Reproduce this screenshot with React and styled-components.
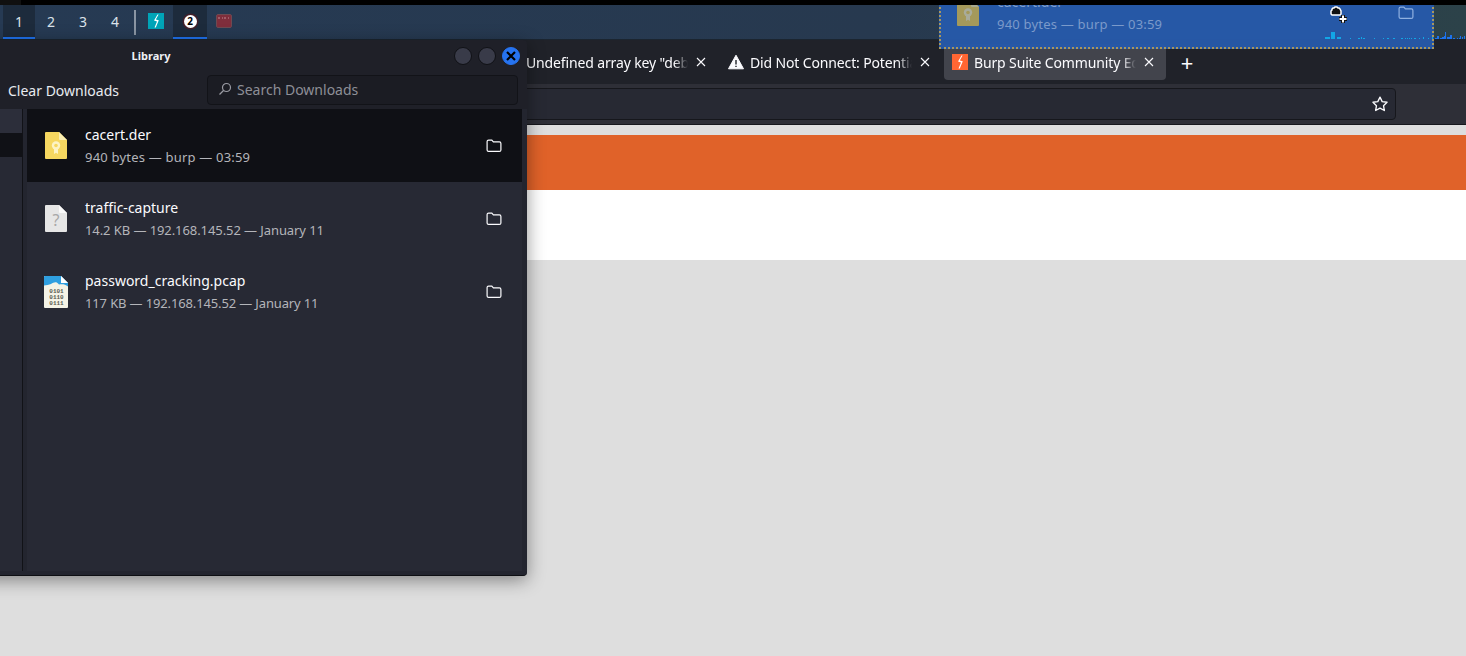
import styled, { createGlobalStyle } from "styled-components";

const GlobalStyle = createGlobalStyle`
  html, body {
    margin: 0;
    padding: 0;
    height: 100%;
    overflow: hidden;
    background: #dedede;
    font-family: "Noto Sans", sans-serif;
  }
  * { box-sizing: border-box; }
`;

const downloads = [
  { name: "cacert.der", meta: "940 bytes — burp — 03:59", kind: "cert", selected: true, tracking: 0.2 },
  { name: "traffic-capture", meta: "14.2 KB — 192.168.145.52 — January 11", kind: "unknown", tracking: -0.08 },
  { name: "password_cracking.pcap", meta: "117 KB — 192.168.145.52 — January 11", kind: "binary", tracking: -0.14 },
];

const cyanBars = [
  [0, 2, 5], [6, 7, 4], [12, 2, 4], [25, 1, 1], [33, 1, 2], [36, 2, 1], [38, 1, 2], [49, 1, 1], [58, 1, 1],
  [62, 1, 2], [68, 1, 2], [76, 1, 2], [80, 1, 1], [82, 1, 1], [84, 1, 1], [86, 1, 1], [89, 1, 2], [94, 1, 1],
  [98, 2, 1], [103, 1, 1], [107, 2, 1],
];
const blueBars = [
  [110, 1, 2], [112, 3, 2], [115, 1, 3], [117, 2, 2], [119, 3, 1], [120, 7, 1], [122, 2, 3], [125, 4, 2],
  [128, 1, 2], [132, 1, 1], [134, 1, 2], [135, 3, 1], [137, 2, 1], [139, 3, 1],
];

function BoltIcon({ bg }) {
  return (
    <svg width="16" height="16" viewBox="0 0 16 16">
      <rect width="16" height="16" fill={bg} />
      <path d="M9.5 1.5 6 7.6 9 8.4 6.5 14.5 7.8 14.5 10.8 7.2 7.8 6.4 10.6 1.5Z" fill="#fff" />
    </svg>
  );
}

function CloseGlyph() {
  return (
    <svg width="10" height="10" viewBox="0 0 10 10" stroke="#fbfbfe" strokeWidth="1.1">
      <path d="M1 1l8 8M9 1l-8 8" />
    </svg>
  );
}

function FolderIcon({ color = "#fbfbfe" }) {
  return (
    <svg width="16" height="14" viewBox="0 0 16 14" fill="none" stroke={color} strokeWidth="1.2">
      <path d="M2.6 1.1h3.2l1.6 1.8h6a1.5 1.5 0 0 1 1.5 1.5v6.5a1.5 1.5 0 0 1-1.5 1.5H2.6a1.5 1.5 0 0 1-1.5-1.5V2.6a1.5 1.5 0 0 1 1.5-1.5Z" />
    </svg>
  );
}

function FileIcon({ kind }) {
  if (kind === "cert") {
    return (
      <svg width="22" height="27" viewBox="0 0 22 27">
        <path d="M1 0h13l8 8v18a1 1 0 0 1-1 1H1a1 1 0 0 1-1-1V1a1 1 0 0 1 1-1Z" fill="#f6d760" />
        <path d="M14 0l8 8h-7a1 1 0 0 1-1-1Z" fill="#fbeeb0" />
        <circle cx="11" cy="13.5" r="4.2" fill="#fdf3c4" />
        <circle cx="11" cy="13.5" r="1.8" fill="#f6d760" />
        <path d="M9 17h4v5l-2-1.2L9 22Z" fill="#fdf3c4" />
      </svg>
    );
  }
  if (kind === "unknown") {
    return (
      <svg width="22" height="27" viewBox="0 0 22 27">
        <path d="M1 0h13l8 8v18a1 1 0 0 1-1 1H1a1 1 0 0 1-1-1V1a1 1 0 0 1 1-1Z" fill="#e6e6e6" />
        <path d="M14 0l8 8h-7a1 1 0 0 1-1-1Z" fill="#fafafa" />
        <text x="11" y="21" textAnchor="middle" fontSize="16" fontFamily="Noto Sans, sans-serif" fill="#a8a8a8">?</text>
      </svg>
    );
  }
  return (
    <svg width="25" height="32" viewBox="0 0 25 32">
      <path d="M1 0h16l7 7v24a1 1 0 0 1-1 1H1a1 1 0 0 1-1-1V1a1 1 0 0 1 1-1Z" fill="#f4f3e6" />
      <path d="M1 0h16l7 7v3.5c-3-2.5-6-2.5-9-2-3-3.5-5-2-8-.5C5 8.5 2 9.5 0 9.5V1a1 1 0 0 1 1-1Z" fill="#2f9fe0" />
      <path d="M17 0l7 7h-7Z" fill="#fff" />
      <g fontSize="6" fontWeight="700" fontFamily="Liberation Mono, monospace" fill="#5a5a50" textAnchor="middle">
        <text x="12.5" y="17">0101</text>
        <text x="12.5" y="23">0110</text>
        <text x="12.5" y="29">0111</text>
      </g>
    </svg>
  );
}

function DownloadRow({ item, ghost }) {
  return (
    <Row $selected={item.selected && !ghost}>
      <IconSlot $ghost={ghost}>
        <FileIcon kind={item.kind} />
      </IconSlot>
      <RowText>
        <RowName $ghost={ghost}>{item.name}</RowName>
        <RowMeta $ghost={ghost} $tracking={item.tracking}>{item.meta}</RowMeta>
      </RowText>
      <FolderSlot>
        <FolderIcon color={ghost ? "#8fb0e0" : "#fbfbfe"} />
      </FolderSlot>
    </Row>
  );
}

export default function App() {
  return (
    <Screen>
      <GlobalStyle />
      <BlackStrip />
      <TopBar>
        {["1", "2", "3", "4"].map((n, i) => (
          <Workspace key={n} $active={i === 0}>{n}</Workspace>
        ))}
        <Separator />
        <AppSlot>
          <BoltIcon bg="#00a4b8" />
        </AppSlot>
        <AppSlot $active>
          <NumberBadge>2</NumberBadge>
        </AppSlot>
        <AppSlot>
          <svg width="16" height="14" viewBox="0 0 16 14">
            <rect x="0.5" y="0.5" width="15" height="13" rx="1.5" fill="#7f2e3c" stroke="#6e4a52" />
            <path d="M3 3v2M6 4h1M9 3v2M12 4h1" stroke="#c08a93" strokeWidth="1" />
          </svg>
        </AppSlot>
        <Graph width="141" height="8" viewBox="0 0 141 8">
          {cyanBars.map(([x, h, w]) => (
            <rect key={x} x={x} y={8 - h} width={w} height={h} fill="#12a6e6" />
          ))}
          {blueBars.map(([x, h, w]) => (
            <rect key={x} x={x} y={8 - h} width={w} height={h} fill="#1c72ee" />
          ))}
        </Graph>
      </TopBar>

      <TabStrip>
        <Tab>
          <TabSpacer />
          <TabTitle>Undefined array key "debug"</TabTitle>
          <TabClose><CloseGlyph /></TabClose>
        </Tab>
        <Tab>
          <svg width="16" height="16" viewBox="0 0 16 16">
            <path d="M8 1.2 15.5 14.8H.5Z" fill="#fbfbfe" stroke="#fbfbfe" strokeLinejoin="round" />
            <path d="M8 6v4.5M8 11.8v1.2" stroke="#202229" strokeWidth="1.4" />
          </svg>
          <TabTitle>Did Not Connect: Potential Security Issue</TabTitle>
          <TabClose><CloseGlyph /></TabClose>
        </Tab>
        <Tab $active>
          <BoltIcon bg="#ff6633" />
          <TabTitle>Burp Suite Community Edition</TabTitle>
          <TabClose><CloseGlyph /></TabClose>
        </Tab>
        <NewTab>+</NewTab>
      </TabStrip>

      <Toolbar>
        <UrlField>
          <svg width="18" height="18" viewBox="0 0 24 24" fill="none" stroke="#fbfbfe" strokeWidth="1.8" strokeLinejoin="round">
            <path d="M12 2.8l2.9 6 6.5.9-4.7 4.5 1.1 6.5-5.8-3.1-5.8 3.1 1.1-6.500-4.7-4.5 6.5-.9Z" />
          </svg>
        </UrlField>
      </Toolbar>

      <PageBody>
        <Banner />
        <WhiteBand />
      </PageBody>

      <LibraryWindow>
        <TitleBar>
          <WindowTitle>Library</WindowTitle>
          <WindowButtons>
            <WindowButton />
            <WindowButton />
            <WindowButton $close>
              <svg width="10" height="10" viewBox="0 0 10 10" stroke="#000" strokeWidth="2.2">
                <path d="M1 1l8 8M9 1l-8 8" />
              </svg>
            </WindowButton>
          </WindowButtons>
        </TitleBar>
        <LibraryBar>
          <ClearButton>Clear Downloads</ClearButton>
          <SearchBox>
            <svg width="14" height="14" viewBox="0 0 14 14" fill="none" stroke="#9a9ba3" strokeWidth="1.2">
              <circle cx="8.5" cy="5.5" r="4" />
              <path d="M5.5 8.5 1.5 12.5" />
            </svg>
            Search Downloads
          </SearchBox>
        </LibraryBar>
        <LibraryBody>
          <Sidebar>
            <SidebarItem $first />
            <SidebarItem $selected />
          </Sidebar>
          <DownloadList>
            {downloads.map((d) => (
              <DownloadRow key={d.name} item={d} />
            ))}
          </DownloadList>
        </LibraryBody>
      </LibraryWindow>

      <DragGhost>
        <DownloadRow item={downloads[0]} ghost />
      </DragGhost>
      <DragCursor width="20" height="20" viewBox="0 0 20 20">
        <path d="M2 9V6l1-1V4l1-1h1l1-1h2l1 1h1l1 1 1 2v3l-1 1H3Z" fill="#111" stroke="#fff" strokeWidth="1.5" />
        <path d="M10 14h8M14 10v8" stroke="#111" strokeWidth="4" />
        <path d="M10.5 14h7M14 10.5v7" stroke="#fff" strokeWidth="2" />
      </DragCursor>
    </Screen>
  );
}

const Screen = styled.div`
  position: relative;
  display: flex;
  flex-direction: column;
  width: 100%;
  height: 100vh;
  overflow: hidden;
`;

const BlackStrip = styled.div`
  position: relative;
  z-index: 3;
  height: 5px;
  flex: none;
  background: linear-gradient(to right, #101010 21px, #000 21px);
`;

const TopBar = styled.div`
  display: flex;
  align-items: stretch;
  height: 35px;
  flex: none;
  padding-left: 3px;
  background: linear-gradient(to right, #263a53, #27394f 60%, #2c4249);
  border-bottom: 1px solid #1b2530;
`;

const Workspace = styled.div`
  width: 32px;
  display: flex;
  align-items: center;
  justify-content: center;
  font-size: 14px;
  color: #dbe2ea;
  background: ${(props) => (props.$active ? "#1d2b3c" : "transparent")};
  border-bottom: 2px solid ${(props) => (props.$active ? "#1f72ee" : "transparent")};
`;

const Separator = styled.div`
  width: 2px;
  height: 25px;
  margin: 5px 3px 0 3px;
  background: #8a95a3;
`;

const AppSlot = styled.div`
  width: 34px;
  display: flex;
  align-items: center;
  justify-content: center;
  background: ${(props) => (props.$active ? "#1d2b3c" : "transparent")};
  border-bottom: 2px solid ${(props) => (props.$active ? "#1f72ee" : "transparent")};
`;

const NumberBadge = styled.div`
  width: 13px;
  height: 13px;
  border-radius: 50%;
  background: #fff;
  box-shadow: 0 0 0 1.5px #43202a;
  color: #000;
  font-size: 10px;
  font-weight: 700;
  line-height: 13px;
  text-align: center;
`;

const Graph = styled.svg`
  position: relative;
  z-index: 3;
  flex: none;
  align-self: flex-end;
  margin-left: auto;
`;

const TabStrip = styled.div`
  display: flex;
  align-items: center;
  gap: 2px;
  height: 44px;
  flex: none;
  padding-left: 496px;
  background: #202229;
`;

const Tab = styled.div`
  display: flex;
  align-items: center;
  gap: 6px;
  width: 222px;
  height: 36px;
  padding: 0 10px 0 8px;
  border-radius: 4px;
  background: ${(props) => (props.$active ? "#42444c" : "transparent")};
`;

const TabSpacer = styled.div`
  width: 16px;
  flex: none;
`;

const TabTitle = styled.div`
  flex: 1;
  min-width: 0;
  overflow: hidden;
  white-space: nowrap;
  font-size: 14px;
  letter-spacing: -0.14px;
  color: #fbfbfe;
  mask-image: linear-gradient(to left, transparent, #000 14px);
`;

const TabClose = styled.div`
  width: 14px;
  flex: none;
  display: flex;
  align-items: center;
  justify-content: center;
`;

const NewTab = styled.div`
  width: 38px;
  text-align: center;
  font-size: 22px;
  line-height: 22px;
  color: #fbfbfe;
`;

const Toolbar = styled.div`
  height: 41px;
  flex: none;
  padding: 4px 70px 4px 0;
  background: #2e2f37;
  border-bottom: 1px solid #17181d;
`;

const UrlField = styled.div`
  display: flex;
  align-items: center;
  justify-content: flex-end;
  height: 32px;
  padding-right: 6px;
  background: #272933;
  border: 1px solid #16171c;
  border-radius: 4px;
`;

const PageBody = styled.div`
  flex: 1;
  padding-top: 10px;
  background: #dedede;
`;

const Banner = styled.div`
  height: 55px;
  background: #e06229;
`;

const WhiteBand = styled.div`
  height: 70px;
  background: #fff;
`;

const LibraryWindow = styled.div`
  position: absolute;
  z-index: 1;
  top: 40px;
  left: -225px;
  width: 752px;
  height: 536px;
  display: flex;
  flex-direction: column;
  background: #1f2028;
  border-bottom: 1px solid #0e0f13;
  border-radius: 4px;
  box-shadow: 0 4px 18px rgba(0, 0, 0, 0.42);
`;

const TitleBar = styled.div`
  position: relative;
  height: 32px;
  padding-bottom: 2px;
  flex: none;
  display: flex;
  align-items: center;
  justify-content: center;
`;

const WindowTitle = styled.div`
  font-size: 11px;
  font-weight: 700;
  color: #eef0f4;
`;

const WindowButtons = styled.div`
  position: absolute;
  right: 7px;
  top: 7px;
  display: flex;
  gap: 6px;
`;

const WindowButton = styled.div`
  width: 18px;
  height: 18px;
  display: flex;
  align-items: center;
  justify-content: center;
  border-radius: 50%;
  background: ${(props) => (props.$close ? "#2673f0" : "#393b49")};
  border: 1px solid ${(props) => (props.$close ? "#2673f0" : "#101116")};
`;

const LibraryBar = styled.div`
  height: 37px;
  flex: none;
  display: flex;
  align-items: flex-start;
  justify-content: space-between;
  padding: 3px 9px 0 233px;
`;

const ClearButton = styled.div`
  font-size: 14px;
  line-height: 32px;
  color: #e8ebf0;
`;

const SearchBox = styled.div`
  width: 311px;
  height: 30px;
  display: flex;
  align-items: center;
  gap: 5px;
  padding: 0 0 2px 10px;
  font-size: 14px;
  color: #8e8f97;
  background: #1b1c23;
  border: 1px solid #121318;
  border-radius: 4px;
`;

const LibraryBody = styled.div`
  flex: 1;
  min-height: 0;
  display: flex;
  padding-bottom: 4px;
  background: #23252f;
  border-bottom-right-radius: 4px;
`;

const Sidebar = styled.div`
  width: 248px;
  flex: none;
  background: #272934;
  border-right: 1px solid #111217;
`;

const SidebarItem = styled.div`
  height: 24px;
  background: ${(props) => (props.$selected ? "#101116" : props.$first ? "#2c2e3a" : "transparent")};
`;

const DownloadList = styled.div`
  flex: 1;
  margin: 0 5px 0 4px;
  background: #272934;
`;

const Row = styled.div`
  display: flex;
  align-items: center;
  height: 73px;
  padding-left: 13px;
  background: ${(props) => (props.$selected ? "#0f1015" : "transparent")};
`;

const IconSlot = styled.div`
  width: 32px;
  margin-right: 13px;
  display: flex;
  justify-content: center;
  flex: none;
  filter: ${(props) => (props.$ghost ? "brightness(0.78)" : "none")};
  opacity: ${(props) => (props.$ghost ? 0.82 : 1)};
`;

const RowText = styled.div`
  flex: 1;
  min-width: 0;
`;

const RowName = styled.div`
  font-size: 14px;
  line-height: 20px;
  color: ${(props) => (props.$ghost ? "#7f9fce" : "#fbfbfe")};
`;

const RowMeta = styled.div`
  margin-top: 3px;
  font-size: 13px;
  line-height: 18px;
  letter-spacing: ${(props) => props.$tracking}px;
  color: ${(props) => (props.$ghost ? "#7b9aca" : "#b4b5ba")};
`;

const FolderSlot = styled.div`
  width: 36px;
  margin-right: 10px;
  display: flex;
  justify-content: center;
  flex: none;
`;

const DragGhost = styled.div`
  position: absolute;
  z-index: 2;
  top: -24px;
  left: 939px;
  width: 495px;
  height: 73px;
  background: rgba(38, 90, 170, 0.96);
  outline: 2px dotted #a8975f;
  outline-offset: -2px;
`;

const DragCursor = styled.svg`
  position: absolute;
  z-index: 4;
  top: 5px;
  left: 1329px;
`;
